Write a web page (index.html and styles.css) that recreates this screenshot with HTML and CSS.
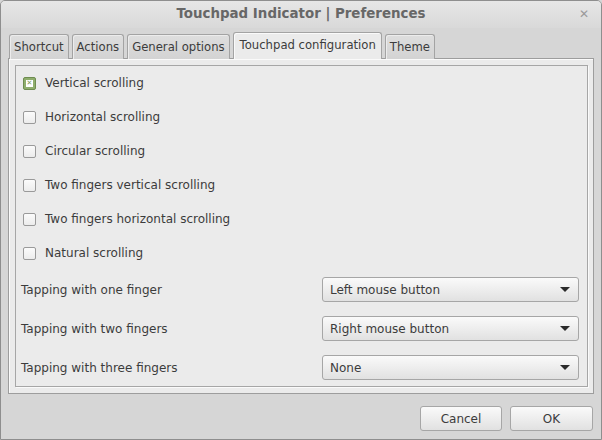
FILE: index.html
```html
<!DOCTYPE html>
<html>
<head>
<meta charset="utf-8">
<link rel="stylesheet" href="styles.css">
</head>
<body>
<div class="window">
  <div class="titlebar">
    <span class="title">Touchpad Indicator | Preferences</span>
    <span class="close">✕</span>
  </div>
  <div class="main">
    <div class="tabs">
      <div class="tab">Shortcut</div>
      <div class="tab">Actions</div>
      <div class="tab">General options</div>
      <div class="tab active">Touchpad configuration</div>
      <div class="tab">Theme</div>
    </div>
    <div class="notebook">
      <div class="frame">
        <div class="checks">
          <div class="check-row"><span class="box checked"><span class="mark">✕</span></span><span>Vertical scrolling</span></div>
          <div class="check-row"><span class="box"></span><span>Horizontal scrolling</span></div>
          <div class="check-row"><span class="box"></span><span>Circular scrolling</span></div>
          <div class="check-row"><span class="box"></span><span>Two fingers vertical scrolling</span></div>
          <div class="check-row"><span class="box"></span><span>Two fingers horizontal scrolling</span></div>
          <div class="check-row"><span class="box"></span><span>Natural scrolling</span></div>
        </div>
        <div class="combos">
          <div class="combo-row"><span>Tapping with one finger</span><div class="combo"><span>Left mouse button</span><span class="arrow"></span></div></div>
          <div class="combo-row"><span>Tapping with two fingers</span><div class="combo"><span>Right mouse button</span><span class="arrow"></span></div></div>
          <div class="combo-row"><span>Tapping with three fingers</span><div class="combo"><span>None</span><span class="arrow"></span></div></div>
        </div>
      </div>
    </div>
    <div class="buttons">
      <div class="btn">Cancel</div>
      <div class="btn">OK</div>
    </div>
  </div>
</div>
</body>
</html>
```
FILE: styles.css
```css
* { box-sizing: border-box; }
html, body { margin: 0; padding: 0; background: #d6d6d6; }
body { font-family: "DejaVu Sans", sans-serif; font-size: 12px; color: #3c3c3c; }

.window {
  width: 602px; height: 440px;
  border: 1px solid #8e8e8e;
  border-radius: 5px 5px 0 0;
  background: #d6d6d6;
  display: flex; flex-direction: column;
  overflow: hidden;
}
.titlebar {
  height: 27px; flex: none;
  position: relative;
  display: flex; align-items: center; justify-content: center;
  padding-bottom: 3px;
  background: linear-gradient(#e6e6e6, #d9d9d9);
}
.title { font-weight: bold; font-size: 13.4px; color: #676767; }
.close { position: absolute; right: 12px; top: 6px; font-size: 12px; font-weight: bold; color: #9a9a9a; }

.main { flex: 1; display: flex; flex-direction: column; padding: 4px 7px 0 7px; }
.tabs { display: flex; align-items: flex-end; gap: 3px; padding-left: 1px; height: 27px; position: relative; z-index: 1; margin-bottom: -1px; font-size: 11.65px; }
.tab {
  height: 25px; padding: 0 4px;
  border: 1px solid #a3a3a3; border-bottom: none;
  border-radius: 3px 3px 0 0;
  background: linear-gradient(#dedede, #d3d3d3);
  display: flex; align-items: center;
  box-shadow: inset 1px 1px 0 #ececec;
}
.tab.active { height: 27px; background: #ebebeb; padding: 0 5px 2px 6px; box-shadow: inset 1px 1px 0 #fafafa; }

.notebook {
  height: 336px;
  border: 1px solid #9d9d9d;
  background: #ebebeb;
  box-shadow: inset 1px 1px 0 #fafafa;
  padding: 6px 5px 6px 6px;
}
.frame {
  height: 100%;
  border: 1px solid #a6a6a6;
  box-shadow: 1px 1px 0 #fafafa;
  padding: 7px 8px 6px 5px;
  display: flex; flex-direction: column;
}
.checks { display: flex; flex-direction: column; gap: 14px; padding-left: 2px; }
.check-row { height: 20px; display: flex; align-items: center; gap: 9px; }
.box {
  width: 13px; height: 13px; border: 1px solid #9a9a9a; border-radius: 2px;
  background: linear-gradient(#fbfbfb, #ececec);
  display: flex; align-items: center; justify-content: center;
}
.box.checked { background: #8fae6d; border-color: #6e8c50; }
.mark {
  width: 7px; height: 7px; background: #fff; color: #7b9a5c;
  font-size: 7px; line-height: 7px; text-align: center; font-weight: bold;
  display: block;
}

.combos { display: flex; flex-direction: column; gap: 14px; margin-top: 14px; }
.combo-row { display: flex; align-items: center; justify-content: space-between; height: 25px; }
.combo {
  width: 257px; height: 25px;
  border: 1px solid #a6a6a6; border-radius: 3px;
  background: linear-gradient(#fafafa, #e1e1e1);
  display: flex; align-items: center; justify-content: space-between;
  padding: 0 8px 0 7px;
}
.arrow { width: 0; height: 0; border-left: 5px solid transparent; border-right: 5px solid transparent; border-top: 5px solid #2a2a2a; }

.buttons { display: flex; justify-content: flex-end; gap: 8px; margin-top: 12px; margin-right: 1px; }
.btn {
  width: 82px; height: 25px;
  border: 1px solid #a6a6a6; border-radius: 3px;
  background: linear-gradient(#fafafa, #e1e1e1);
  display: flex; align-items: center; justify-content: center;
}
.btn + .btn { width: 83px; }
```
